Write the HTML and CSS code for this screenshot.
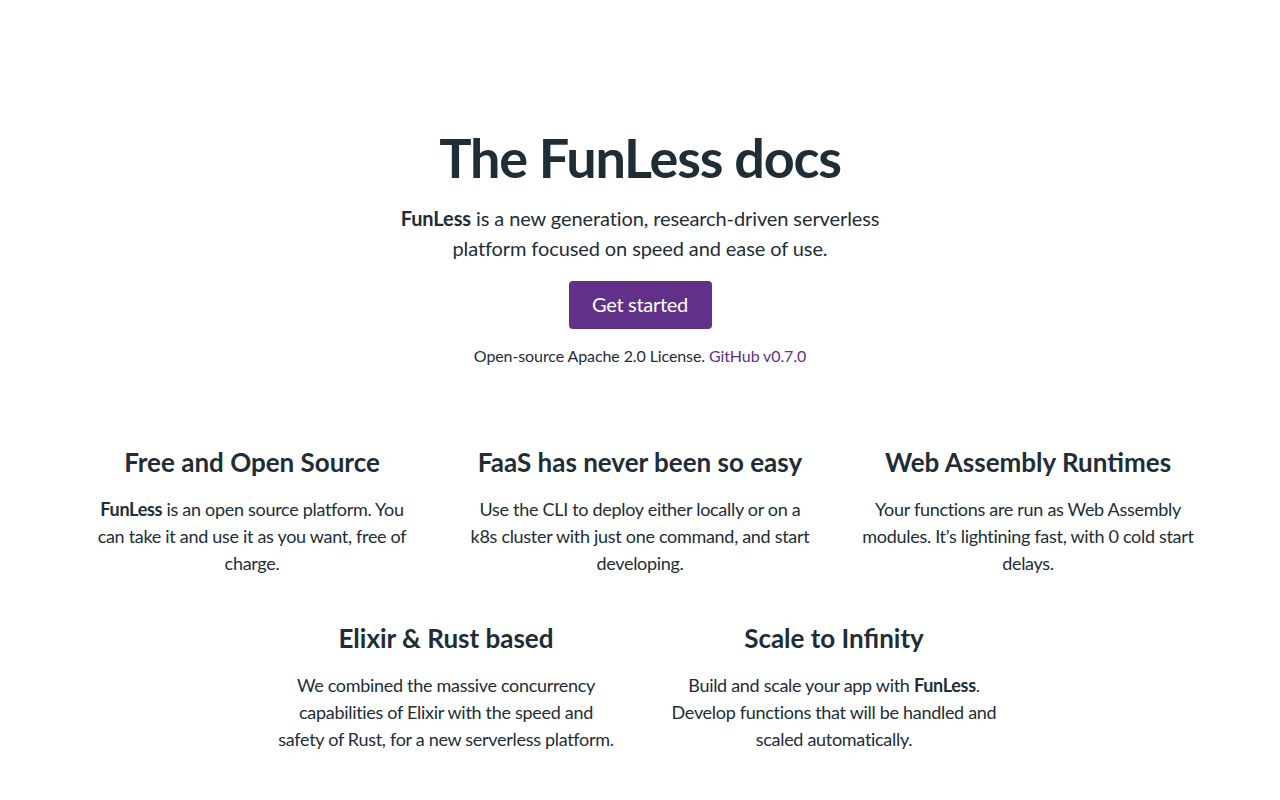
FILE: index.html
```html
<!DOCTYPE html>
<html lang="en">
<head>
<meta charset="utf-8">
<title>The FunLess docs</title>
<link rel="stylesheet" href="styles.css">
</head>
<body>
<main class="page">
  <section class="hero">
    <h1 class="hero-title">The FunLess docs</h1>
    <p class="lead"><strong>FunLess</strong> is a new generation, research-driven serverless platform focused on speed and ease of use.</p>
    <a class="btn" href="#">Get started</a>
    <p class="license">Open-source Apache 2.0 License. <a class="link" href="#">GitHub v0.7.0</a></p>
  </section>
  <section class="features">
    <div class="feature">
      <h2 class="feature-title">Free and Open Source</h2>
      <p class="feature-text"><strong>FunLess</strong> is an open source platform. You<br>can take it and use it as you want, free of<br>charge.</p>
    </div>
    <div class="feature">
      <h2 class="feature-title">FaaS has never been so easy</h2>
      <p class="feature-text">Use the CLI to deploy either locally or on a<br>k8s cluster with just one command, and start<br>developing.</p>
    </div>
    <div class="feature">
      <h2 class="feature-title">Web Assembly Runtimes</h2>
      <p class="feature-text">Your functions are run as Web Assembly<br>modules. It’s lightining fast, with 0 cold start<br>delays.</p>
    </div>
    <div class="feature">
      <h2 class="feature-title">Elixir &amp; Rust based</h2>
      <p class="feature-text">We combined the massive concurrency<br>capabilities of Elixir with the speed and<br>safety of Rust, for a new serverless platform.</p>
    </div>
    <div class="feature">
      <h2 class="feature-title">Scale to Infinity</h2>
      <p class="feature-text">Build and scale your app with <strong>FunLess</strong>.<br>Develop functions that will be handled and<br>scaled automatically.</p>
    </div>
  </section>
</main>
</body>
</html>
```

FILE: styles.css
```css
html, body {
  margin: 0;
  padding: 0;
  background: #ffffff;
}

body {
  font-family: "Lato", "Liberation Sans", sans-serif;
  color: #1e2d36;
}

.page {
  width: 1164px;
  margin: 0 auto;
  padding-top: 124px;
}

.hero {
  display: flex;
  flex-direction: column;
  align-items: center;
  text-align: center;
}

.hero-title {
  margin: 0;
  font-size: 54px;
  line-height: 68px;
  font-weight: 700;
  letter-spacing: -1.2px;
}

.lead {
  margin: 11px 0 0;
  width: 500px;
  font-size: 20px;
  line-height: 30px;
  font-weight: 400;
  letter-spacing: -0.1px;
}

.lead strong,
.feature-text strong {
  font-weight: 700;
}

.btn {
  margin-top: 18px;
  display: inline-flex;
  align-items: center;
  justify-content: center;
  width: 143px;
  height: 48px;
  box-sizing: border-box;
  padding-bottom: 2px;
  background: #61318a;
  color: #ffffff;
  border-radius: 4px;
  font-size: 20px;
  text-decoration: none;
  letter-spacing: -0.3px;
}

.license {
  margin: 15px 0 0;
  font-size: 16px;
  line-height: 24px;
  letter-spacing: -0.1px;
}

.link {
  color: #61318a;
  text-decoration: none;
}

.features {
  margin-top: 78px;
  display: flex;
  flex-wrap: wrap;
  justify-content: center;
  row-gap: 45px;
}

.feature {
  width: 388px;
  box-sizing: border-box;
  padding: 0 10px;
  text-align: center;
}

.feature-title {
  margin: 0;
  font-size: 26px;
  line-height: 32px;
  font-weight: 700;
}

.feature-text {
  margin: 18px 0 0;
  font-size: 18px;
  line-height: 27px;
  letter-spacing: -0.3px;
}
```
